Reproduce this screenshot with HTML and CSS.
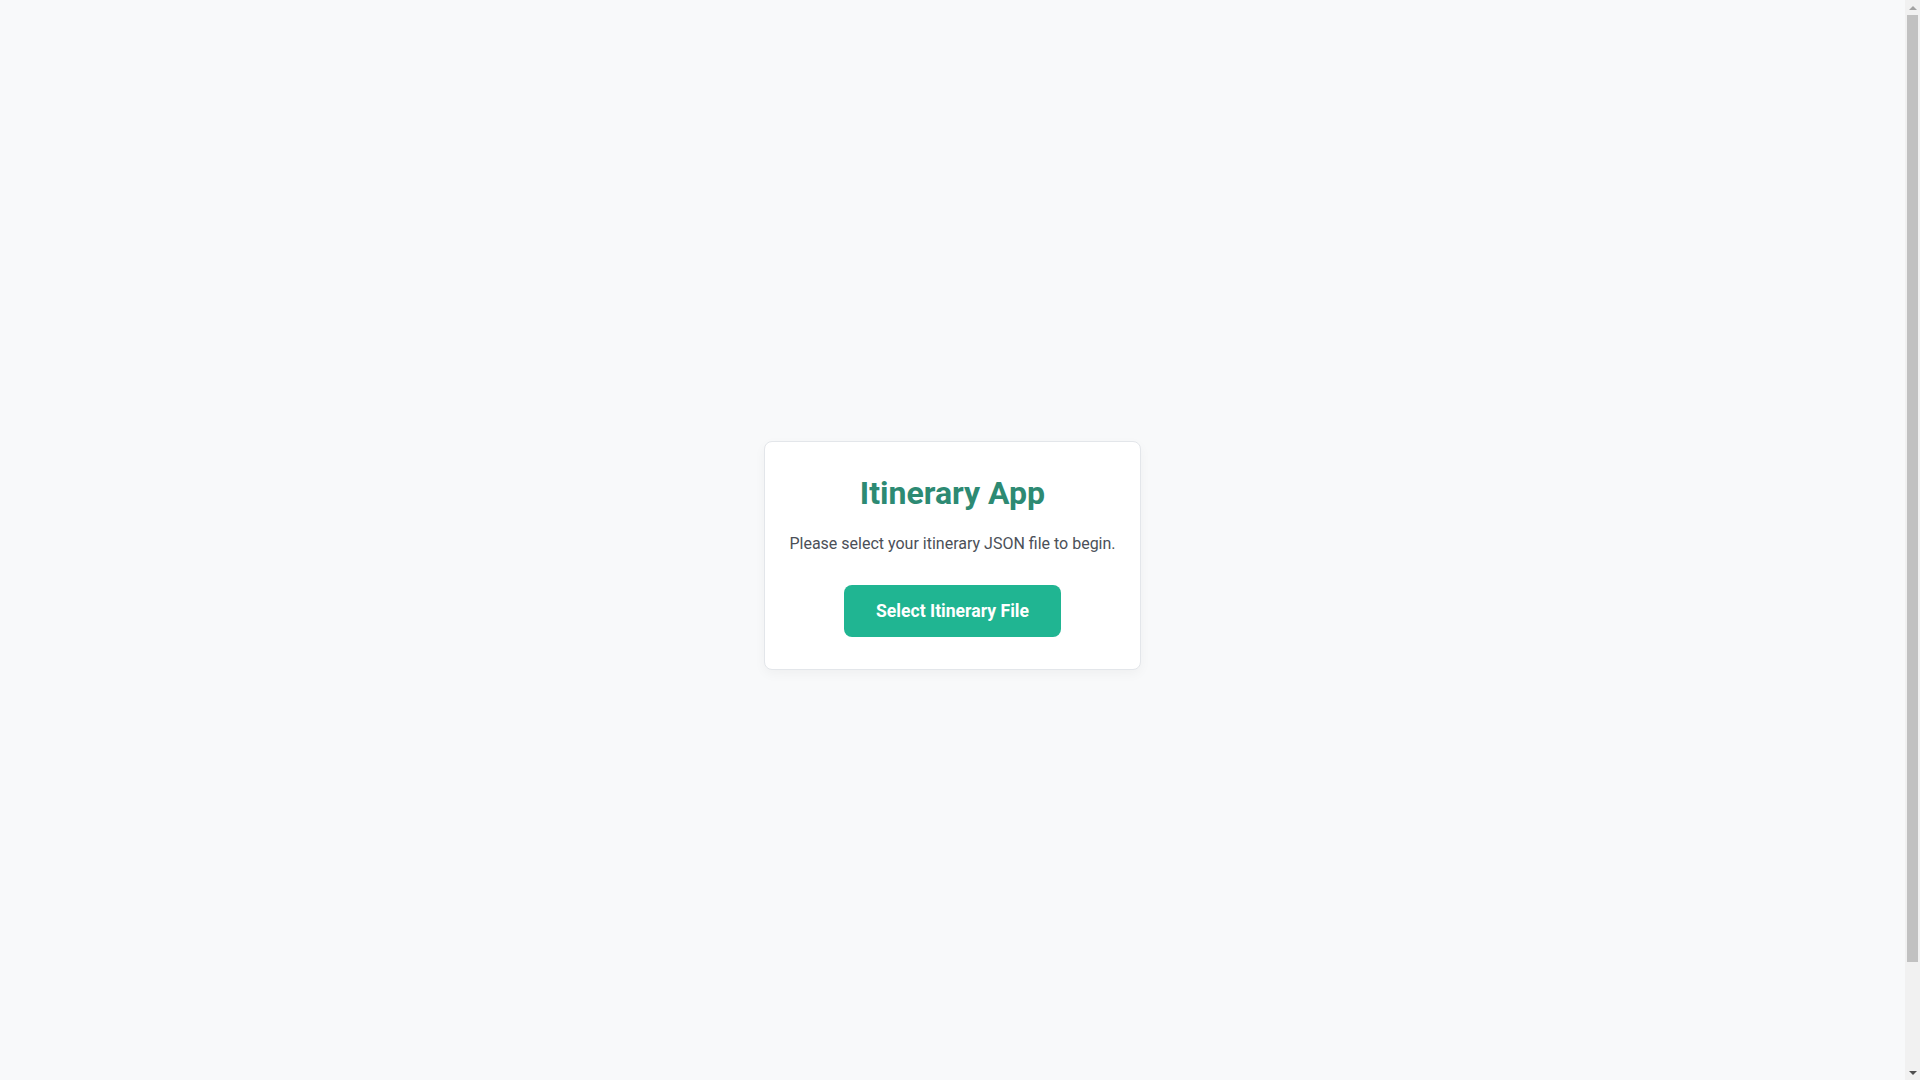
FILE: index.html
```html
<!DOCTYPE html>
<html lang="en">
<head>
<meta charset="utf-8">
<title>Itinerary App</title>
<link rel="stylesheet" href="styles.css">
</head>
<body>
<main class="page">
  <section class="card">
    <h1 class="title">Itinerary App</h1>
    <p class="lead">Please select your itinerary JSON file to begin.</p>
    <button class="btn" type="button">Select Itinerary File</button>
  </section>
</main>
<div class="scrollbar" aria-hidden="true">
  <div class="sb-btn"><span class="arrow-up"></span></div>
  <div class="sb-track"><div class="sb-thumb"></div></div>
  <div class="sb-btn"><span class="arrow-down"></span></div>
</div>
</body>
</html>
```
FILE: styles.css
```css
html, body {
  margin: 0;
  padding: 0;
}
body {
  background: #f8f9fa;
  font-family: Roboto, "Liberation Sans", Arial, sans-serif;
  color: #4b5058;
  display: flex;
  height: 100vh;
  overflow: hidden;
}
.page {
  flex: 1;
  box-sizing: border-box;
  height: 100vh;
  padding: 31px 16px 0;
  display: flex;
  align-items: center;
  justify-content: center;
}
.card {
  background: #ffffff;
  border: 1px solid #e3e6ea;
  border-radius: 8px;
  box-shadow: 0 4px 12px rgba(0, 0, 0, 0.04);
  padding: 32px 24px;
  text-align: center;
}
.title {
  margin: 0 0 20px;
  font-size: 32px;
  font-weight: 700;
  color: #2d8a73;
  line-height: 1.2;
}
.lead {
  margin: 0 0 29px;
  font-size: 16px;
  line-height: 1.5;
  color: #4b5058;
}
.btn {
  font-family: Roboto, "Liberation Sans", Arial, sans-serif;
  font-size: 17.6px;
  font-weight: 700;
  color: #ffffff;
  background: #20b592;
  border: none;
  border-radius: 8px;
  padding: 13px 32px;
  line-height: 26px;
  cursor: pointer;
}
.scrollbar {
  width: 15px;
  height: 100vh;
  background: #f1f1f1;
  display: flex;
  flex-direction: column;
  flex-shrink: 0;
}
.sb-btn {
  height: 15px;
  display: flex;
  align-items: center;
  justify-content: center;
}
.arrow-up {
  width: 0;
  height: 0;
  border-left: 4px solid transparent;
  border-right: 4px solid transparent;
  border-bottom: 4px solid #a3a3a3;
}
.arrow-down {
  width: 0;
  height: 0;
  border-left: 4px solid transparent;
  border-right: 4px solid transparent;
  border-top: 4px solid #505050;
}
.sb-track {
  flex: 1;
  padding: 0 2px;
}
.sb-thumb {
  height: 90.2%;
  background: #c1c1c1;
}
```
